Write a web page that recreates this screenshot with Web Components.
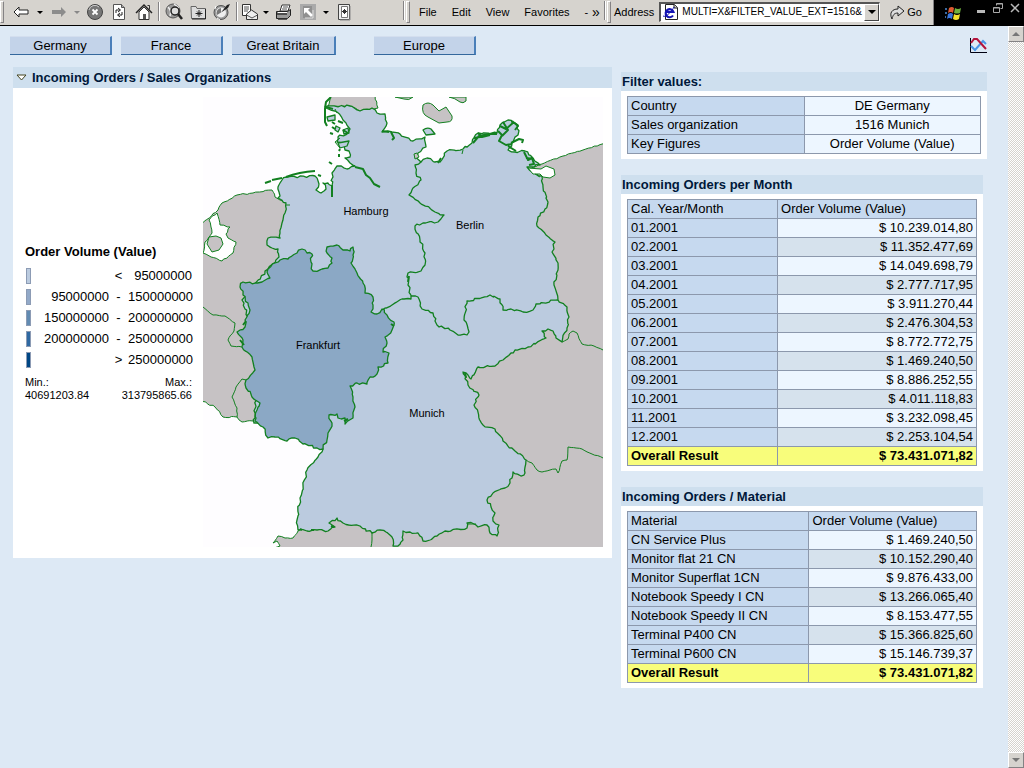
<!DOCTYPE html>
<html lang="en">
<head>
<meta charset="utf-8">
<title>Incoming Orders</title>
<style>
body { margin: 0; font-family: "Liberation Sans", Arial, sans-serif; font-size: 13px; color: #000; background: #dde9f5; }
</style>
</head>
<body>
<orders-app></orders-app>

<script>
const define = (name, html, setup) => {
  const t = document.createElement('template');
  t.innerHTML = html;
  customElements.define(name, class extends HTMLElement {
    constructor() {
      super();
      this.attachShadow({ mode: 'open' }).append(t.content.cloneNode(true));
    }
    connectedCallback() { if (setup) setup(this, this.shadowRoot); }
  });
};

/* ---------- toolbar icons ---------- */
const ICONS = {
  back: '<path d="M2 9l5-5v3h9v4H7v3z" fill="#fff" stroke="#222"/>',
  forward: '<path d="M16 9l-5-5v3H2v4h9v3z" fill="#8c8c8c"/>',
  caret: '<path d="M6 8h6l-3 3z" fill="#000"/>',
  caretOff: '<path d="M6 8h6l-3 3z" fill="#888"/>',
  stop: '<circle cx="9" cy="9" r="7.500" fill="#777" stroke="#444"/><path d="M3 7a6 6 0 0 1 10-3" stroke="#ccc" fill="none"/><path d="M6.500 6.500l5 5m0-5l-5 5" stroke="#fff" stroke-width="1.800"/>',
  refresh: '<path d="M3.500 1.500h8l3 3v12h-11z" fill="#fff" stroke="#555"/><path d="M11.500 1.500v3h3" fill="#aaa" stroke="#555"/><path d="M6 10V7h4M8 5l2.500 2L8 9M12 9v3H8m2-2l-2.500 2L10 14" fill="none" stroke="#222"/>',
  home: '<path d="M4 9v7.500h10V9L9 4z" fill="#fff" stroke="#333"/><path d="M1 10l8-8 8 8" fill="none" stroke="#222" stroke-width="1.500"/><path d="M12.500 2.500h2v4" fill="none" stroke="#333"/><path d="M8 11h3v5H8z" fill="#555"/>',
  search: '<circle cx="8" cy="8" r="7" fill="#999" stroke="#555"/><path d="M3 4q4 4 2 9M9 1q3 2 5 4" stroke="#eee" fill="none" stroke-width="1.500"/><circle cx="10" cy="8" r="4" fill="#ddd" stroke="#222" stroke-width="1.500"/><path d="M13 11l4 5" stroke="#222" stroke-width="2.500"/>',
  favorites: '<path d="M2 3.500h5l1 2h8.500v10h-14z" fill="#ddd" stroke="#666"/><path d="M16.500 6v10H3" stroke="#222" fill="none"/><path d="M10 7v7M6.500 10.500h7M8 8.500l4 4m0-4l-4 4" stroke="#222"/>',
  history: '<circle cx="8" cy="9.500" r="7" fill="#999" stroke="#555"/><circle cx="8" cy="9.500" r="5" fill="#eee"/><path d="M8 9.500L14 2l3-1-2 4z" fill="#222"/><path d="M8 9.500V5a5 5 0 0 0-4 7z" fill="#777"/><path d="M3 3l-1 3M4 15l3 2" stroke="#fff"/>',
  mail: '<path d="M1.500 1.500h8v11h-8z" fill="#fff" stroke="#333"/><path d="M3 4h5M3 6h5M3 8h4" stroke="#555"/><path d="M5.500 11l5-4 6 4v5.500h-11z" fill="#eee" stroke="#333"/><path d="M5.500 12l5.500 3 5.500-3" fill="none" stroke="#555"/>',
  print: '<path d="M5 8l2-6h8l-2 6z" fill="#fff" stroke="#333"/><path d="M8 4h5M7 6h5" stroke="#555"/><path d="M1.500 8.500h11l3-2v6l-3 3h-11z" fill="#999" stroke="#222"/><path d="M2 11h10M3 16h9" stroke="#333" stroke-width="1.500"/><path d="M3 9.500h9" stroke="#fff"/>',
  edit: '<path d="M1 1h16v16H1z" fill="#aaa"/><path d="M4 3h9v12H4z" fill="#909090"/><path d="M5 5h6L9 7l5 5-2 2-5-5-2 2z" fill="#fff"/><path d="M14 7v8H6" stroke="#ddd" fill="none"/>',
  notes: '<path d="M3.500 1.500h11v15h-11z" fill="#eee" stroke="#444"/><path d="M6.500 3.500h6v11h-6z" fill="#fff" stroke="#777"/><path d="M9.500 6v5M7 8.500h5M8 7l3 3m0-3l-3 3" stroke="#333"/><path d="M15 3v14H5" stroke="#888" fill="none"/>',
  go: '<path d="M3 16c-3-6 0-10 6-10V3l6 5-6 5v-3c-4 0-5 2-6 6z" fill="#ddd" stroke="#222"/>',
  page: '<path d="M4.500 1.500h9l3 3v12h-12z" fill="#fff" stroke="#222"/><path d="M13 1.500v3.500h3.500" fill="#ccc" stroke="#222"/><path d="M12 12.500a4 4 0 1 1 .5-3.500H5" fill="none" stroke="#1414b4" stroke-width="2.200"/><path d="M2 13C5 15 11 8 13 4" stroke="#1414b4" fill="none"/>',
  windows: '<g><path d="M4 4q3-2 5 0l-1 5q-2-2-5 0z" fill="#e05a32"/><path d="M10 4q3 2 6 0l-1 5q-3 1-6 0z" fill="#6fb13c"/><path d="M3 10q3-2 5 0l-1 5q-3-2-5 0z" fill="#3c78dc"/><path d="M9 10q3 2 6 0l-1 5q-3 2-6 0z" fill="#f5e12d"/><path d="M0 4h2v2H0zM0 8h2v2H0zM0 12h1v2H0z" fill="#3c6aa0"/></g>',
  minimize: '<path d="M5 10h8v3H5z" fill="#b9b9b9"/>',
  restore: '<path d="M7.500 5.500V3.500h6v5h-2M7.500 4h6" fill="none" stroke="#aaa"/><path d="M4.500 7.500h6v5h-6zM4.500 8h6" fill="none" stroke="#aaa"/>',
  close: '<path d="M5 4l8 8m0-8l-8 8" stroke="#b9b9b9" stroke-width="1.500"/>',
  chart: '<path d="M1.500 1v14.500H18" fill="none" stroke="#001"/><path d="M2 9l4 4 8-9 3 3" fill="none" stroke="#4b96e6" stroke-width="2"/><path d="M2 6l3-4h3l9 10" fill="none" stroke="#b4143c" stroke-width="2"/>'
};
define('tool-icon', `<style>:host{display:inline-flex;flex:none}svg{display:block;width:18px;height:18px}</style><svg viewBox="0 0 18 18" aria-hidden="true"></svg>`,
  (el, root) => { root.querySelector('svg').innerHTML = ICONS[el.getAttribute('name')]; });

define('tool-button', `<style>
:host{display:flex;flex:none;justify-content:center;align-items:center}
button{all:unset;display:flex;justify-content:center}
</style><button type="button"></button>`, (el, root) => {
  const b = root.querySelector('button');
  b.setAttribute('aria-label', el.getAttribute('label'));
  const i = document.createElement('tool-icon');
  i.setAttribute('name', el.getAttribute('icon'));
  b.replaceChildren(i);
});

define('bar-grip', `<style>:host{display:block;flex:none;width:2px;height:20px;border:1px solid;border-color:#fff #848284 #848284 #fff}</style>`);
define('bar-line', `<style>:host{display:block;flex:none;width:1px;height:19px;background:#848284;border-right:1px solid #fff}</style>`);

define('browser-bar', `<style>
:host{display:flex;height:23px;padding-bottom:2px;background:#d6d3ce;border-bottom:1px solid #000;font-size:11px;align-items:center}
.tools{display:grid;flex:none;align-items:center;justify-items:center;padding-left:4px;
  grid-template-columns:26px 12px 25px 12px 24px 23px 27px 4px 26px 22px 26px 4px 22px 10px 25px 24px 11px 26px}
.tools tool-button{width:18px}
.menus{display:flex;flex:none;box-sizing:border-box;gap:15px;padding-left:7px;width:180px}
.menus a,.go{color:#000;text-decoration:none;white-space:nowrap}
.more{flex:none;width:12px;font-size:14px;line-height:12px}
.pair{display:flex;flex:none;gap:1px;margin-right:2px}
.space{flex:none;width:46px}
label{padding:0 5px 0 1px}
.box{display:flex;flex:1;min-width:0;align-items:center;height:17px;background:#fff;border:1px solid #fff;border-top:2px solid #555;border-left:2px solid #555}
input{all:unset;flex:1;min-width:0;padding-left:3px;font-size:10px;line-height:16px;color:#000;white-space:nowrap}
.drop{all:unset;box-sizing:border-box;width:15px;height:17px;background:#d6d3ce;border:1px solid;border-color:#fff #444 #444 #fff;display:grid;place-items:center}
.drop svg{display:block;width:8px;height:4px}
.go{display:flex;align-items:center;gap:0;padding:0 11px 0 9px}
.win{display:grid;flex:none;align-self:flex-start;box-sizing:border-box;width:91px;height:25px;background:#000;grid-template-columns:36px 18px 16px 18px;padding-left:2px;border-left:1px solid #848284}
.win tool-button{align-items:start}
.win tool-button:first-child{padding-top:4px}
</style>
<bar-grip></bar-grip>
<div class="tools">
<tool-button icon="back" label="Back"></tool-button><tool-button icon="caret" label="Back list"></tool-button>
<tool-button icon="forward" label="Forward"></tool-button><tool-button icon="caretOff" label="Forward list"></tool-button>
<tool-button icon="stop" label="Stop"></tool-button><tool-button icon="refresh" label="Refresh"></tool-button><tool-button icon="home" label="Home"></tool-button>
<bar-line></bar-line>
<tool-button icon="search" label="Search"></tool-button><tool-button icon="favorites" label="Favorites"></tool-button><tool-button icon="history" label="History"></tool-button>
<bar-line></bar-line>
<tool-button icon="mail" label="Mail"></tool-button><tool-button icon="caret" label="Mail list"></tool-button>
<tool-button icon="print" label="Print"></tool-button><tool-button icon="edit" label="Edit page"></tool-button><tool-button icon="caret" label="Edit list"></tool-button>
<tool-button icon="notes" label="Notes"></tool-button>
</div>
<div class="space"></div>
<div class="pair"><bar-line></bar-line><bar-grip></bar-grip></div>
<nav class="menus"><a href="#">File</a><a href="#">Edit</a><a href="#">View</a><a href="#">Favorites</a><span>-</span></nav>
<span class="more">»</span>
<div class="pair"><bar-line></bar-line><bar-grip></bar-grip></div>
<label for="url">Address</label>
<div class="box"><tool-icon name="page"></tool-icon><input id="url" value="MULTI=X&amp;FILTER_VALUE_EXT=1516&amp;"><button class="drop" type="button" aria-label="Address list"><svg viewBox="0 0 8 4" aria-hidden="true"><path d="M0 0h8L4 4z"/></svg></button></div>
<a class="go" href="#"><tool-icon name="go"></tool-icon>Go</a>
<div class="win"><tool-button icon="windows" label="Windows"></tool-button><tool-button icon="minimize" label="Minimize"></tool-button><tool-button icon="restore" label="Restore"></tool-button><tool-button icon="close" label="Close"></tool-button></div>`);

define('country-button', `<style>
:host{display:block}
button{all:unset;box-sizing:border-box;width:100%;height:19px;line-height:18px;text-align:center;background:#c3d3e9;border-right:2px solid #4a7fb9;border-bottom:1px solid #34679c;border-top:1px solid #d3deee;white-space:nowrap}
</style><button type="button"><slot></slot></button>`);

define('info-panel', `<style>
:host{display:block}
h2{margin:0;display:flex;align-items:center;gap:5px;height:var(--head,19px);padding-left:var(--indent,1px);font-size:13px;line-height:19px;background:#cedfee;color:#00183a;white-space:nowrap}
.body{background:#fff;padding:var(--pad,5px 6px 5px 6px)}
</style><h2><slot name="mark"></slot><slot name="title"></slot></h2><div class="body"><slot></slot></div>`);

/* ---------- tables ---------- */
const TABLES = {
  filter: [['Country','DE Germany'],['Sales organization','1516 Munich'],['Key Figures','Order Volume (Value)']],
  month: [['Cal. Year/Month','Order Volume (Value)'],['01.2001','$ 10.239.014,80'],['02.2001','$ 11.352.477,69'],['03.2001','$ 14.049.698,79'],['04.2001','$ 2.777.717,95'],['05.2001','$ 3.911.270,44'],['06.2001','$ 2.476.304,53'],['07.2001','$ 8.772.772,75'],['08.2001','$ 1.469.240,50'],['09.2001','$ 8.886.252,55'],['10.2001','$ 4.011.118,83'],['11.2001','$ 3.232.098,45'],['12.2001','$ 2.253.104,54'],['Overall Result','$ 73.431.071,82']],
  material: [['Material','Order Volume (Value)'],['CN Service Plus','$ 1.469.240,50'],['Monitor flat 21 CN','$ 10.152.290,40'],['Monitor Superflat 1CN','$ 9.876.433,00'],['Notebook Speedy I CN','$ 13.266.065,40'],['Notebook Speedy II CN','$ 8.153.477,55'],['Terminal P400 CN','$ 15.366.825,60'],['Terminal P600 CN','$ 15.146.739,37'],['Overall Result','$ 73.431.071,82']]
};
define('data-table', `<style>
:host{display:block}
table{width:100%;border-collapse:collapse;table-layout:fixed}
col:first-child{width:var(--first,50%)}
tr{height:19px}
th,td{box-sizing:border-box;height:19px;padding:0 3px;border:1px solid #8c98ac;font-weight:400;line-height:18px;text-align:left;white-space:nowrap}
th{background:#c6d9ef}
td{background:#edf6ff;text-align:right}
tbody tr:nth-child(even) td{background:#d6e2ed}
.filter tbody tr:nth-child(n) td{background:#edf6ff;text-align:center}
tbody tr.total th,tbody tr.total td{background:#f8fd7b;font-weight:700}
</style><table><colgroup><col><col></colgroup><thead></thead><tbody></tbody></table>`, (el, root) => {
  const kind = el.getAttribute('kind');
  const rows = TABLES[kind].slice();
  root.querySelector('table').className = kind;
  if (kind !== 'filter') {
    const h = rows.shift();
    root.querySelector('thead').innerHTML = `<tr><th scope="col">${h[0]}</th><th scope="col">${h[1]}</th></tr>`;
  } else root.querySelector('thead').remove();
  root.querySelector('tbody').innerHTML = rows.map(r =>
    `<tr${r[0] === 'Overall Result' ? ' class="total"' : ''}><th scope="row">${r[0]}</th><td>${r[1]}</td></tr>`).join('');
});

/* ---------- legend ---------- */
define('map-legend', `<style>
:host{display:block}
h3{margin:0 0 4px;font-size:13px;line-height:19px;white-space:nowrap}
.row{display:grid;grid-template-columns:8px 76px 19px 1fr;height:21px;line-height:21px;align-items:center;text-align:right;white-space:nowrap}
i{display:block;width:3px;height:14px;margin-left:1px;border:1px solid #8c9bb4}
.op{text-align:center}
.ends{display:flex;justify-content:space-between;margin-top:6px;font-size:11px;line-height:13px}
.ends div:last-child{text-align:right}
</style>
<h3>Order Volume (Value)</h3>
<div class="rows"></div>
<div class="ends"><div>Min.:<br>40691203.84</div><div>Max.:<br>313795865.66</div></div>`, (el, root) => {
  root.querySelector('.rows').innerHTML = [
    ['#bbcbdf','','&lt;','95000000'],['#92a9c8','95000000','-','150000000'],['#628bb2','150000000','-','200000000'],
    ['#2f69a2','200000000','-','250000000'],['#004684','','&gt;','250000000']
  ].map(r => `<div class="row"><i style="background:${r[0]}"></i><span>${r[1]}</span><span class="op">${r[2]}</span><span>${r[3]}</span></div>`).join('');
});

/* ---------- map ---------- */
const GEO = {
  west: '200,225 218,210 222,203 237,195 253,193 272,190 275,197 280,200 290,203 300,260 300,400 253,421 242,422 237,417 223,417 215,407 200,400',
  east: '542,164 563,156 583,150 606,143 606,550 270,550 280,546 277,541 273,543 278,536 285,538 293,538 298,531 400,480 450,200',
  denmark: '331,94 328,107 350,106 360,111 372,110 378,108 374,94',
  germany: '286,203 278,198 280,196 278,187 282,180 287,177 315,176 319,184 316,190 321,193 326,189 323,183 328,183 332,186 332,173 337,166 347,169 355,166 350,163 345,158 350,157 349,151 345,150 343,145 337,142 338,137 348,133 350,129 346,123 343,120 337,112 325,107 350,106 360,111 372,108 377,113 385,114 387,123 382,132 392,132 400,134 413,141 425,137 426,147 418,153 415,157 421,162 427,158 435,162 440,162 447,151 463,149 472,143 478,133 497,133 500,125 508,120 518,125 518,135 512,143 508,150 515,152 525,151 533,158 540,165 527,167 533,173 542,176 543,187 548,202 545,209 538,217 537,226 546,235 555,242 552,252 558,263 558,270 554,285 558,300 567,307 569,317 567,328 562,342 556,338 553,331 548,329 542,331 546,338 528,347 515,350 503,360 495,366 478,367 471,379 463,372 468,385 479,395 474,405 483,425 495,429 503,441 515,451 526,460 525,473 521,476 513,472 510,483 505,488 493,493 487,500 491,507 495,513 493,521 499,525 497,536 490,533 487,525 478,527 474,524 467,523 467,528 445,531 437,536 430,540 423,541 418,533 410,532 403,531 403,540 398,546 393,546 392,537 386,532 380,530 372,533 360,526 343,523 337,518 329,523 335,527 328,531 317,530 307,531 298,530 297,520 300,498 303,485 307,470 318,457 323,449 290,430 254,423 260,350 242,300 268,269 279,257 278,249 272,248 267,245 268,238 280,238 280,233 282,223 285,213',
  frankfurt: '268,269 275,263 280,260 288,259 297,253 302,249 307,253 312,254 311,262 313,271 322,269 328,268 332,263 332,258 327,253 327,247 337,245 343,250 350,251 353,247 353,255 351,263 357,273 363,283 365,293 373,297 373,305 371,312 377,314 382,309 387,315 394,322 392,330 385,337 387,343 383,352 389,353 388,363 378,367 377,374 370,377 367,384 357,383 350,386 353,397 355,407 353,418 345,424 345,418 338,418 337,414 329,415 332,423 328,433 327,440 323,449 317,448 303,444 295,438 287,441 275,437 268,438 263,427 255,421 257,410 260,403 252,397 246,388 246,380 255,370 252,357 242,347 243,340 237,332 245,327 245,320 250,310 248,303 243,295 240,287 243,282 255,283 262,282 270,278 267,272',
  ijssel: '217,213 209,220 212,233 205,242 203,253 222,261 233,253 236,242 228,238 226,234 230,227 220,225'
};
const LINES = [
  '421,162 415,165 416,173 421,180 413,188 409,195 420,203 435,212 444,215 438,222 423,223 415,226 420,240 425,253 425,265 421,271 408,273 408,285 411,295',
  '382,310 392,305 402,299 411,299 411,295',
  '411,296 418,297 422,309 433,313 437,325 450,330 458,335 467,335 469,332 464,320 467,301 490,295 500,299 503,310 511,309 523,312 533,310 536,304 558,300',
  '562,342 568,339 569,334 573,331 577,333 582,344 594,346 603,350',
  '526,460 532,463 537,470 542,472 550,470 556,469 558,473 562,461 567,460 568,447 582,449 592,454 603,458',
  '372,533 372,540 371,547',
  '203,307 213,315 225,316 235,323 234,331 228,340 231,346 242,347',
  '246,380 242,379 236,387 232,397 237,408 237,417'
];
const ISLANDS = [
  'M423 105q5-4 10 0l6 6 7-4 6 9q1 6-5 6l-8 1-11-6q-7-3-5-12z', 'M449 97h17v4q-3 3-6 1-5-4-11-5z', 'M395 97h18q-4 4-9 2z',
  'M423 130q4-3 8-1l4 5-9 1z', 'M327 117l8-2v5l-7 1z', 'M336 126l4 2-2 4-3-2z', 'M343 130l5-2 1 5-5 1z', 'M216 236l5 2 2 6-4 6-7 2-5-8 2-7z',
  'M338 143l11-2-2 5-7 2z', 'M414 154l3-1 2 4-4 2z'
];
/* Breaks each straight stretch into short pixel-sized wiggles, as a surveyed border has. */
const roughen = (text, amount, close) => {
  const p = text.split(' ').map(s => s.split(',').map(Number));
  if (close) p.push(p[0]);
  let d = 'M' + p[0];
  for (let i = 1; i < p.length; i++) {
    const [ax, ay] = p[i - 1], [bx, by] = p[i];
    const n = Math.max(1, Math.round(Math.hypot(bx - ax, by - ay) / 3));
    for (let k = 1; k <= n; k++) {
      let x = ax + (bx - ax) * k / n, y = ay + (by - ay) * k / n;
      if (k < n) {
        x += Math.sin(x * 12.9 + y * 78.2) * amount;
        y += Math.sin(x * 39.3 + y * 11.1) * amount;
      }
      d += 'L' + x.toFixed(1) + ' ' + y.toFixed(1);
    }
  }
  return d + (close ? 'Z' : '');
};
define('sales-map', `<style>
:host{display:block}
svg{display:block;width:100%;height:auto;overflow:hidden}
path{stroke:#128020;stroke-width:1;stroke-linejoin:round}
.land{fill:#c6c2c4}.region{fill:#bbcbdf;stroke-width:1.300}.hot{fill:#8ba8c5;stroke-width:1.300}
.sea{fill:#fff}.line{fill:none}.thick{fill:none;stroke-width:2}
text{font-size:11px;text-anchor:middle;fill:#000}
</style><svg viewBox="203 97 400 450" role="img" aria-label="Order volume by sales organization"></svg>`, (el, root) => {
  const shape = (k, cls, a) => `<path class="${cls}" d="${roughen(GEO[k], a, true)}"/>`;
  root.querySelector('svg').innerHTML =
    '<rect x="203" y="97" width="400" height="450" fill="#fefdff"/>' +
    shape('west', 'land', .6) + shape('east', 'land', .4) + shape('denmark', 'land', .4) +
    shape('ijssel', 'sea', .6) + shape('germany', 'region', 1) + shape('frankfurt', 'hot', 1.1) +
    LINES.map((l, i) => `<path class="line" d="${roughen(l, i < 3 ? 1 : .4, false)}"${i < 3 ? ' style="stroke-width:1.3"' : ''}/>`).join('') +
    ISLANDS.map((d, i) => `<path d="${d}" class="${[3, 4, 5, 6, 8].includes(i) ? 'region' : 'land'}"/>`).join('') +
    '<path class="sea" d="M528 168l13 1 5-3 8 3 1 6-5 3-7-1-3-3-7 0z"/>' +
    '<path class="thick" d="M355 167l8 2 3 6 4 3 4 6 6 3M332 185v12M286 177q13-5 29-6M272 180l10-2M265 183l6-2M326 107l7 2M325 108l1-6 5-5M325 108v14l2 4"/>' +
    '<path class="thick" d="M473 143l6-7 10-2 8 0M474 138l12-2M478 133l4 4 8-2M498 131l4 4-3 6 7 4 6-1M500 126l6 3 8-7M503 122l5 8-6 6M512 121l6 5-3 4M511 143l8-4 4 1-1 3M508 146l8 5M524 152l4 8 4-2 2 6-5 1M526 158l8 1M438 163l3-5M391 132l3 6-2 2M382 131l7 1M343 130l5 3M332 122l3 2M330 133l3 1M338 121l5 2M332 127l3 2M329 162l3 2M339 154v3M340 149l-1 2M318 175l3 1"/>' +
    '<path class="thick" d="M243 325l3-4M240 340l4 5M300 529l2 1M311 530h3M334 527l-3-1M391 324l3 2M344 421l4-2M409 276l-1 6M465 373l1 5"/>' +
    '<path class="line" d="M286 205h4M467 524h9M335 109l2 4M340 138l-5 4 5 6M463 150l-1 4M535 174l5 3"/>' +
    '<text x="366" y="215">Hamburg</text><text x="470" y="229">Berlin</text><text x="318" y="349">Frankfurt</text><text x="427" y="417">Munich</text>';
});

define('scroll-rail', `<style>
:host{display:flex;flex-direction:column;justify-content:space-between;flex:none;width:16px;
background:repeating-conic-gradient(#d6d3ce 0 25%,#fff 0 50%) 0 0/2px 2px}
button{all:unset;box-sizing:border-box;width:16px;height:16px;background:#d6d3ce;border:1px solid;border-color:#fff #848284 #848284 #fff;display:grid;place-items:center}
svg{display:block;width:8px;height:4px;fill:#777}
</style>
<button type="button" aria-label="Scroll up"><svg viewBox="0 0 8 4"><path d="M0 4l4-4 4 4z"/></svg></button>
<button type="button" aria-label="Scroll down"><svg viewBox="0 0 8 4"><path d="M0 0h8L4 4z"/></svg></button>`);

define('orders-app', `<style>
:host{display:flex;flex-direction:column;min-height:100vh}
.view{display:flex;flex:1}
main{flex:1;min-width:0;padding:10px 21px 16px 13px}
nav{display:flex;align-items:center;margin:0 0 12px -3px}
nav country-button{width:102px;margin-right:9px}
nav .wide{width:104px;margin-right:38px}
nav tool-button{margin-left:auto}
.cols{display:grid;grid-template-columns:minmax(0,599fr) minmax(0,366fr);gap:9px;align-items:start}
.main{--head:21px;--indent:3px;--pad:9px 9px 11px 12px}
.chart{display:grid;grid-template-columns:167px minmax(0,1fr);gap:11px}
map-legend{padding-top:145px}
.side{display:grid;gap:16px;padding-top:5px}
.narrow{margin-right:4px}
</style>
<browser-bar></browser-bar>
<div class="view">
<main>
<nav><country-button>Germany</country-button><country-button>France</country-button><country-button class="wide">Great Britain</country-button><country-button>Europe</country-button><tool-button icon="chart" label="Chart"></tool-button></nav>
<div class="cols">
<info-panel class="main">
<svg slot="mark" width="11" height="7" viewBox="0 0 11 7" aria-hidden="true"><path d="M1 1h9L5.500 6z" fill="#fff" stroke="#444420"/></svg>
<span slot="title">Incoming Orders / Sales Organizations</span>
<div class="chart"><map-legend></map-legend><sales-map></sales-map></div>
</info-panel>
<div class="side">
<info-panel><span slot="title">Filter values:</span><data-table kind="filter"></data-table></info-panel>
<info-panel class="narrow"><span slot="title">Incoming Orders per Month</span><data-table kind="month" style="--first:43%"></data-table></info-panel>
<info-panel class="narrow"><span slot="title">Incoming Orders / Material</span><data-table kind="material" style="--first:52%"></data-table></info-panel>
</div>
</div>
</main>
<scroll-rail></scroll-rail>
</div>`);
</script>
</body>
</html>
